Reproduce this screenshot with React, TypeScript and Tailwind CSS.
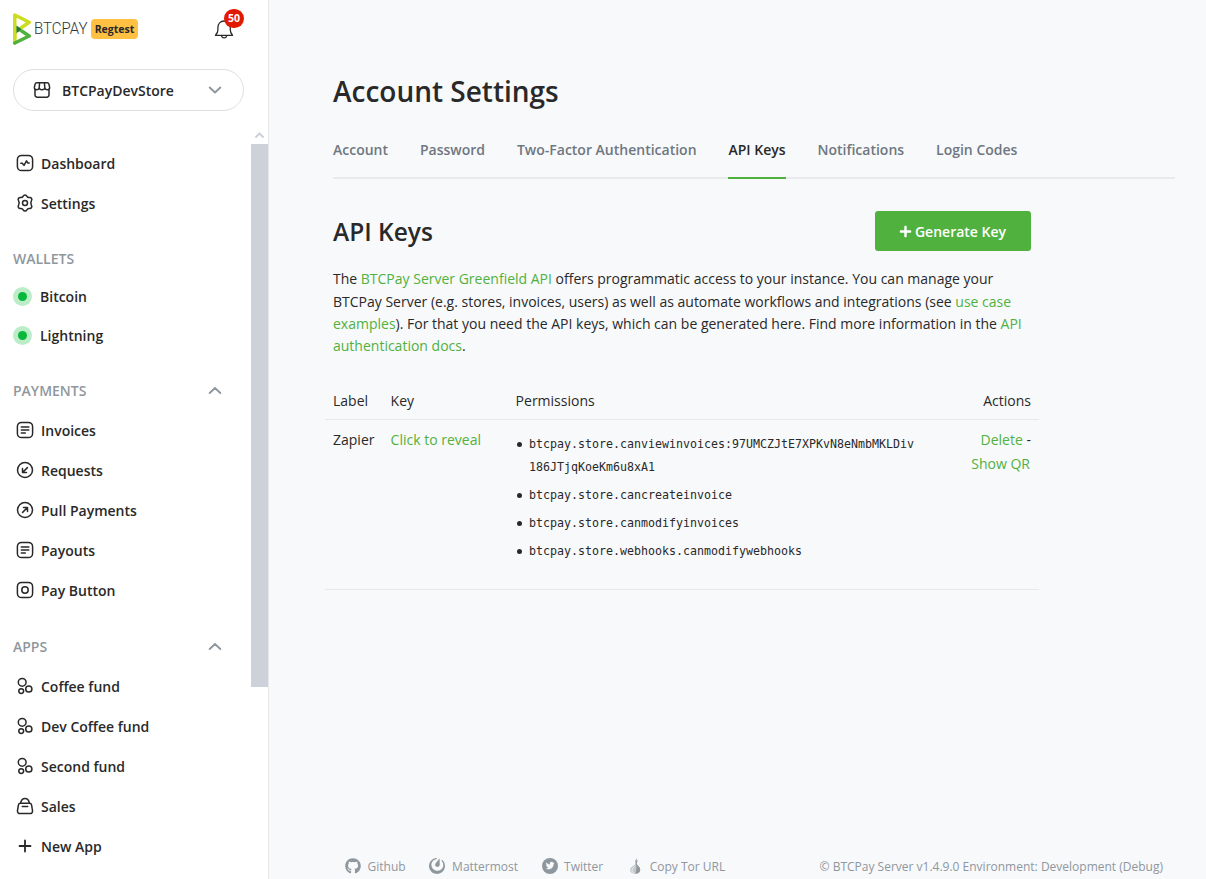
import type { ReactNode } from "react";
import { FaGithub, FaPlus } from "react-icons/fa";
import { SiMattermost } from "react-icons/si";

function Glyph({ children, className = "" }: { children: ReactNode; className?: string }) {
  return (
    <svg
      viewBox="0 0 24 24"
      className={`h-6 w-6 shrink-0 ${className}`}
      fill="none"
      stroke="currentColor"
      strokeWidth="1.5"
      strokeLinecap="round"
      strokeLinejoin="round"
    >
      {children}
    </svg>
  );
}

const icons: Record<string, ReactNode> = {
  dashboard: (
    <>
      <rect x="4.4" y="4.4" width="15.2" height="15.2" rx="4.2" />
      <path d="M7.800 12.200h1.500l1.700 2.200 2.500-4.600 1.400 2.200h1.300" />
    </>
  ),
  settings: (
    <>
      <circle cx="12" cy="12" r="2.500" />
      <path d="M10.200 5.100a2 2 0 0 1 3.600 0c.5 1.100 1.500 1.600 2.600 1.500a2 2 0 0 1 2 3.200c-.7 1.300-.7 3.100 0 4.400a2 2 0 0 1-2 3.200c-1.100-.1-2.100.4-2.600 1.500a2 2 0 0 1-3.600 0c-.5-1.100-1.500-1.600-2.600-1.500a2 2 0 0 1-2-3.200c.7-1.300.7-3.100 0-4.400a2 2 0 0 1 2-3.200c1.100.1 2.100-.4 2.600-1.500z" />
    </>
  ),
  invoice: (
    <>
      <rect x="4.4" y="4.4" width="15.2" height="15.2" rx="4.2" />
      <path d="M8.300 9h7.500M8.300 12h7.500M8.300 15h4" />
    </>
  ),
  request: (
    <>
      <circle cx="12" cy="12" r="7.5" />
      <path d="M14.400 9.600l-4.600 4.600M9.500 10.500v4h4" />
    </>
  ),
  pull: (
    <>
      <circle cx="12" cy="12" r="7.5" />
      <path d="M9.600 14.400l4.600-4.600M10.500 9.500h4v4" />
    </>
  ),
  button: (
    <>
      <rect x="4.4" y="4.4" width="15.2" height="15.2" rx="4.2" />
      <circle cx="12" cy="12" r="3.200" />
    </>
  ),
  crowd: (
    <>
      <circle cx="9.200" cy="8.300" r="3.900" />
      <circle cx="15.800" cy="15" r="3.100" />
      <circle cx="8.200" cy="17.100" r="2.400" />
    </>
  ),
  sales: (
    <>
      <path d="M7.500 9.300h9c1.100 0 1.900.7 2.100 1.800l.9 5.400c.3 1.700-.8 3.100-2.500 3.100H7c-1.700 0-2.800-1.400-2.500-3.100l.9-5.400c.2-1.100 1-1.800 2.100-1.800z" />
      <path d="M7.500 9.300c.6-2.900 2.200-4.900 4.500-4.900s3.900 2 4.500 4.900M9.300 12.500h5.400" />
    </>
  ),
  plus: <path d="M12 6.500v11M6.500 12h11" strokeWidth="1.8" />,
};

function NavItem({ icon, label }: { icon: string; label: string }) {
  return (
    <a className="flex h-10 items-center gap-1">
      <Glyph>{icons[icon]}</Glyph>
      <span className="pt-0.5">{label}</span>
    </a>
  );
}

function Chevron({ up = false }: { up?: boolean }) {
  return (
    <svg viewBox="0 0 14 8" className="h-2 w-3.5" fill="none" stroke="#8f979e" strokeWidth="1.9" strokeLinecap="round" strokeLinejoin="round">
      <path d={up ? "M1.700 6 7 1l5.300 5" : "M1.700 1.500 7 6.500l5.300-5"} />
    </svg>
  );
}

function Section({ label, toggle = false }: { label: string; toggle?: boolean }) {
  return (
    <div className="flex h-5 items-center justify-between pr-[29px] text-[#8f979e]">
      <span>{label}</span>
      {toggle && <Chevron up />}
    </div>
  );
}

function Wallet({ label }: { label: string }) {
  return (
    <a className="flex h-[39px] items-center gap-2">
      <span className="flex h-[19px] w-[19px] items-center justify-center rounded-full bg-[#bdecc8]">
        <span className="h-[9px] w-[9px] rounded-full bg-[#08b838]" />
      </span>
      <span>{label}</span>
    </a>
  );
}

function Sidebar() {
  return (
    <aside className="flex h-full w-[269px] shrink-0 flex-col border-r border-[#e6e8ea] bg-white text-sm font-semibold text-[#292929]">
      <header className="flex h-[58px] items-center pl-[13px] pr-8">
        <svg viewBox="0 0 18 34" className="h-[34px] w-[18px] shrink-0">
          <g fill="none" strokeWidth="3.500" strokeLinejoin="round" strokeLinecap="round">
            <path d="M1.800 31V15" stroke="#cedc21" />
            <path d="M1.800 31 16.200 24 5 16.500" stroke="#51b13e" />
            <path d="M1.800 26V3l14.400 7.200L5 18" stroke="#cedc21" />
          </g>
          <path d="M3.500 13.500v7.800L8.700 17.300z" fill="#1e7a44" />
        </svg>
        <span className="ml-[3px] flex w-[57px] shrink-0">
          <span className="origin-left scale-x-[0.910] font-['Roboto',sans-serif] text-[16.500px] font-light leading-6 text-[#333]">BTCPAY</span>
        </span>
        <span className="flex h-5 w-[47px] shrink-0 items-center justify-center rounded bg-[#ffc043] pt-px text-[10.500px] font-bold">Regtest</span>
        <div className="relative ml-auto h-6 w-6">
          <svg viewBox="0 0 24 24" className="h-6 w-6" fill="none" stroke="#292929" strokeWidth="1.300" strokeLinejoin="round" strokeLinecap="round">
            <path d="M3.500 18.300h17c-1.500-1.700-2.200-3.300-2.200-5.300v-2.300c0-4-2.500-6.700-6.200-6.700s-6.200 2.700-6.200 6.700V13c0 2-.8 3.600-2.400 5.300zM9.500 18.500c.2 1.500 1.200 2.400 2.600 2.400s2.400-.9 2.600-2.400" />
          </svg>
          <span className="absolute left-3 -top-2 flex h-[19px] w-5 items-center justify-center rounded-full bg-[#e11900] text-[10.500px] font-bold text-white">50</span>
        </div>
      </header>
      <div className="ml-[13px] mt-[11px] flex h-[42px] w-[231px] items-center rounded-full border border-[#dde0e3] pl-4 pr-[21px]">
        <Glyph>
          <path d="M5 11.200V17a2.200 2.200 0 0 0 2.200 2.200h9.600A2.200 2.200 0 0 0 19 17v-5.800" />
          <path d="M6.800 4.800h10.400c1 0 1.500.5 1.700 1.300l.7 3c.3 1.500-.6 2.600-2 2.600s-2.700-.8-2.800-2c-.1 1.200-1.300 2-2.800 2s-2.700-.8-2.800-2c-.1 1.200-1.400 2-2.800 2s-2.300-1.100-2-2.600l.7-3c.2-.8.7-1.300 1.700-1.300zM9.200 9.700l.4-4.900M14.800 9.700l-.4-4.900" />
        </Glyph>
        <span className="ml-2 pt-0.5">BTCPayDevStore</span>
        <span className="ml-auto"><Chevron /></span>
      </div>
      <div className="mt-[17px] flex flex-1 overflow-hidden">
        <nav className="flex-1 pl-[13px] pt-[15px]">
          <NavItem icon="dashboard" label="Dashboard" />
          <NavItem icon="settings" label="Settings" />
          <div className="mt-[26px]"><Section label="WALLETS" /></div>
          <div className="mt-2"><Wallet label="Bitcoin" /><Wallet label="Lightning" /></div>
          <div className="mt-[26px]"><Section label="PAYMENTS" toggle /></div>
          <div className="mt-[9px]">
            <NavItem icon="invoice" label="Invoices" />
            <NavItem icon="request" label="Requests" />
            <NavItem icon="pull" label="Pull Payments" />
            <NavItem icon="invoice" label="Payouts" />
            <NavItem icon="button" label="Pay Button" />
          </div>
          <div className="mt-[27px]"><Section label="APPS" toggle /></div>
          <div className="mt-[9px]">
            <NavItem icon="crowd" label="Coffee fund" />
            <NavItem icon="crowd" label="Dev Coffee fund" />
            <NavItem icon="crowd" label="Second fund" />
            <NavItem icon="sales" label="Sales" />
            <NavItem icon="plus" label="New App" />
          </div>
        </nav>
        <div className="flex w-[17px] flex-col items-center">
          <svg viewBox="0 0 17 16" className="h-4 w-[17px] shrink-0" fill="none" stroke="#cdd1d9" strokeWidth="2">
            <path d="M4.500 9.500l4-4 4 4" />
          </svg>
          <div className="h-[543px] w-full bg-[#cdd1d9]" />
        </div>
      </div>
    </aside>
  );
}

const tabs = ["Account", "Password", "Two-Factor Authentication", "API Keys", "Notifications", "Login Codes"];

function Permission({ children }: { children: ReactNode }) {
  return (
    <li className="mb-[5px] flex">
      <span className="mr-[7px] mt-[9px] h-[5px] w-[5px] shrink-0 rounded-full bg-[#292929]" />
      <code className="font-['DejaVu_Sans_Mono',monospace]">{children}</code>
    </li>
  );
}

export default function App() {
  return (
    <div className="flex h-[879px] w-[1206px] overflow-hidden bg-[#f8f9fb] font-['Open_Sans',sans-serif] text-[#292929]">
      <Sidebar />
      <main className="flex flex-1 flex-col pl-16 pr-[31px] pt-[72px] text-sm">
        <h1 className="text-[28px] font-semibold leading-[38px]">Account Settings</h1>
        <div className="mt-[29px] flex h-10 gap-[31.920px] border-b-2 border-[#e8eaec] font-semibold leading-[22px] text-[#6e7780]">
          {tabs.map((t) => (
            <a key={t} className={t === "API Keys" ? "h-10 border-b-2 border-[#51b13e] text-[#292929]" : "h-10"}>{t}</a>
          ))}
        </div>
        <div className="mt-8 flex h-10 w-[698px] items-center justify-between">
          <h2 className="text-[24.500px] font-semibold leading-9 pt-px">API Keys</h2>
          <button className="flex h-10 w-[156px] items-center justify-center gap-[3px] rounded-[3px] bg-[#51b13e] pr-px font-semibold text-white">
            <FaPlus className="h-[13px] w-[13px]" />
            <span className="pt-0.5">Generate Key</span>
          </button>
        </div>
        <p className="mt-[17.400px] w-[698px] leading-[22.300px]">
          The <a className="text-[#51b13e]">BTCPay Server Greenfield API</a> offers programmatic access to your instance. You can manage your<br />
          BTCPay Server (e.g. stores, invoices, users) as well as automate workflows and integrations (see <a className="text-[#51b13e]">use case<br />examples</a>). For that you need the API keys, which can be generated here. Find more information in the <a className="text-[#51b13e]">API<br />authentication docs</a>.
        </p>
        <div className="-ml-2 mt-[24.400px] w-[714px]">
          <div className="grid h-[38px] grid-cols-[57.600px_125px_1fr_auto] items-center border-b border-[#e6e8ea] px-2 pt-px">
            <span>Label</span><span>Key</span><span>Permissions</span><span>Actions</span>
          </div>
          <div className="grid h-[170px] grid-cols-[57.600px_125px_1fr_70px] border-b border-[#e6e8ea] px-2 pt-2 leading-6">
            <span>Zapier</span>
            <a className="text-[#51b13e]">Click to reveal</a>
            <ul className="pl-[1.400px] pt-[4.700px] font-['DejaVu_Sans_Mono',monospace] text-[11.630px] leading-[23.200px]">
              <Permission>btcpay.store.canviewinvoices:97UMCZJtE7XPKvN8eNmbMKLDiv<br />186JTjqKoeKm6u8xA1</Permission>
              <Permission>btcpay.store.cancreateinvoice</Permission>
              <Permission>btcpay.store.canmodifyinvoices</Permission>
              <Permission>btcpay.store.webhooks.canmodifywebhooks</Permission>
            </ul>
            <div className="text-right"><a className="text-[#51b13e]">Delete</a> -<br /><a className="pr-px text-[#51b13e]">Show QR</a></div>
          </div>
        </div>
        <footer className="mt-auto flex h-[26px] items-center px-3 text-xs text-[#8f979e]">
          <a className="flex items-center gap-[6.500px]"><FaGithub className="h-4 w-4" /><span className="pt-0.5">Github</span></a>
          <a className="ml-[23.500px] flex items-center gap-[7px]"><SiMattermost className="h-4 w-4" /><span className="pt-0.5">Mattermost</span></a>
          <a className="ml-6 flex items-center gap-[6px]">
            <svg viewBox="0 0 16 16" className="h-4 w-4">
              <circle cx="8" cy="8" r="8" fill="#8f979e" />
              <path d="M12.500 5.100c-.3.200-.7.300-1 .3.400-.2.600-.6.800-1-.4.200-.7.300-1.100.4A1.800 1.800 0 0 0 8 6.500C6.500 6.400 5.200 5.700 4.300 4.600c-.5.900-.2 1.900.6 2.400-.3 0-.6-.1-.8-.2 0 .9.600 1.600 1.400 1.800-.2.100-.5.100-.8 0 .2.700.9 1.200 1.700 1.200-.8.600-1.700.8-2.600.7 3.700 2.200 7.800-.2 7.800-4.400.3-.3.700-.6.900-1z" fill="#f8f9fb" />
            </svg>
            <span className="pt-0.5">Twitter</span>
          </a>
          <a className="ml-6 flex items-center gap-[6.500px]">
            <svg viewBox="0 0 16 16" className="h-4 w-4">
              <path d="M10 .2C8.800 1.300 8.400 2.500 8.500 4c.1 1.700-.3 2.300-1.700 3.400C4.700 8.700 3 9.800 3 12c0 2.400 2.200 3.800 5 3.800s5.200-1.600 5.200-4.100c0-1.900-1.200-3-2.400-4.200C9.800 6.500 9.500 5.400 10 4c.3-.9 1-1.500 1.700-2-.9.200-1.600.6-2.200 1.300C9.300 2.100 9.500 1.200 10 .2z" fill="#c3c8cc" />
              <path d="M10 .2C8.800 1.300 8.400 2.500 8.500 4c.1 1.700.9 2.800.9 5.500s-.3 4.500-1.400 6.300c2.800 0 5.200-1.600 5.200-4.100 0-1.900-1.200-3-2.400-4.200C9.800 6.500 9.500 5.400 10 4c.3-.9 1-1.500 1.700-2-.9.200-1.600.6-2.200 1.300C9.300 2.100 9.500 1.200 10 .2z" fill="#8f979e" />
              <path d="M7.500 8.800C6 9.800 5 10.700 5 12.300s1 2.300 2.300 2.800" fill="none" stroke="#f8f9fb" strokeWidth=".8" />
            </svg>
            <span className="pt-0.5">Copy Tor URL</span>
          </a>
          <span className="ml-auto pt-0.5">© BTCPay Server v1.4.9.0 Environment: Development (Debug)</span>
        </footer>
      </main>
    </div>
  );
}
